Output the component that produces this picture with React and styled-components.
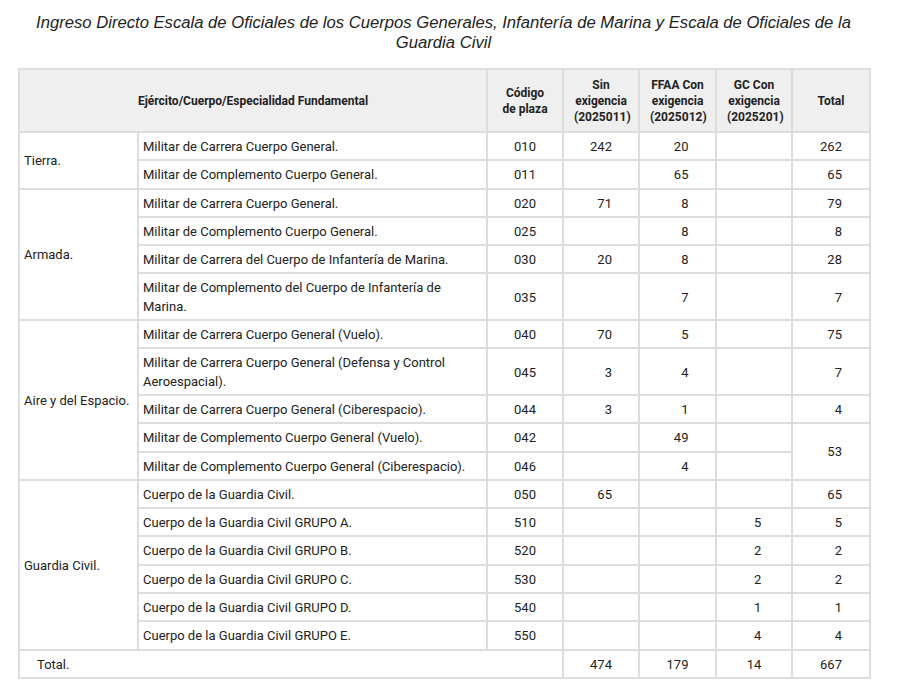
import React from "react";
import styled, { createGlobalStyle } from "styled-components";

const GlobalStyle = createGlobalStyle`
  body {
    margin: 0;
    background: #ffffff;
    font-family: Roboto, "Liberation Sans", Arial, sans-serif;
    color: #222222;
  }
`;

const Wrapper = styled.div`
  width: 851px;
  margin: 0 0 0 18px;
  padding-top: 13px;
`;

const Title = styled.h2`
  margin: 0 0 15px 0;
  font-family: "Liberation Sans", Arial, sans-serif;
  font-size: 16.65px;
  font-style: italic;
  font-weight: normal;
  line-height: 20px;
  text-align: center;
  color: #222222;
`;

const Table = styled.table`
  width: 851px;
  table-layout: fixed;
  border-collapse: collapse;
  border: 2px solid #dddddd;
  font-size: 13px;
`;

const HeadCell = styled.th`
  background: #efefef;
  border: 2px solid #dddddd;
  padding: 7px 10px 6px;
  font-size: 12px;
  font-weight: bold;
  line-height: 16px;
  text-align: center;
  vertical-align: middle;
`;

const Cell = styled.td`
  border: 2px solid #dddddd;
  padding: 5px 4px 3px;
  line-height: 18.3px;
  vertical-align: middle;
  text-align: ${(p) => (p.$center ? "center" : "left")};
  padding-left: ${(p) => (p.$indent ? "17px" : "4px")};
`;

const Num = styled.span`
  display: inline-block;
  width: ${(p) => p.$digits * 0.562}em;
  text-align: right;
`;

const columns = [119, 349, 76, 76, 77, 76, 78];
const digits = [3, 3, 2, 3];

const groups = [
  {
    name: "Tierra.",
    rows: [
      ["Militar de Carrera Cuerpo General.", "010", "242", "20", "", "262"],
      ["Militar de Complemento Cuerpo General.", "011", "", "65", "", "65"],
    ],
  },
  {
    name: "Armada.",
    rows: [
      ["Militar de Carrera Cuerpo General.", "020", "71", "8", "", "79"],
      ["Militar de Complemento Cuerpo General.", "025", "", "8", "", "8"],
      ["Militar de Carrera del Cuerpo de Infantería de Marina.", "030", "20", "8", "", "28"],
      ["Militar de Complemento del Cuerpo de Infantería de Marina.", "035", "", "7", "", "7"],
    ],
  },
  {
    name: "Aire y del Espacio.",
    rows: [
      ["Militar de Carrera Cuerpo General (Vuelo).", "040", "70", "5", "", "75"],
      ["Militar de Carrera Cuerpo General (Defensa y Control Aeroespacial).", "045", "3", "4", "", "7"],
      ["Militar de Carrera Cuerpo General (Ciberespacio).", "044", "3", "1", "", "4"],
      ["Militar de Complemento Cuerpo General (Vuelo).", "042", "", "49", "", { value: "53", span: 2 }],
      ["Militar de Complemento Cuerpo General (Ciberespacio).", "046", "", "4", "", null],
    ],
  },
  {
    name: "Guardia Civil.",
    rows: [
      ["Cuerpo de la Guardia Civil.", "050", "65", "", "", "65"],
      ["Cuerpo de la Guardia Civil GRUPO A.", "510", "", "", "5", "5"],
      ["Cuerpo de la Guardia Civil GRUPO B.", "520", "", "", "2", "2"],
      ["Cuerpo de la Guardia Civil GRUPO C.", "530", "", "", "2", "2"],
      ["Cuerpo de la Guardia Civil GRUPO D.", "540", "", "", "1", "1"],
      ["Cuerpo de la Guardia Civil GRUPO E.", "550", "", "", "4", "4"],
    ],
  },
];

const totals = ["474", "179", "14", "667"];

function NumCell({ value, col, span }) {
  return (
    <Cell $center rowSpan={span}>
      {value ? <Num $digits={digits[col]}>{value}</Num> : null}
    </Cell>
  );
}

export default function App() {
  return (
    <>
      <GlobalStyle />
      <Wrapper>
        <Title>
          Ingreso Directo Escala de Oficiales de los Cuerpos Generales, Infantería de Marina y
          Escala de Oficiales de la Guardia Civil
        </Title>
        <Table>
          <colgroup>
            {columns.map((w, i) => (
              <col key={i} style={{ width: w }} />
            ))}
          </colgroup>
          <thead>
            <tr>
              <HeadCell colSpan={2}>Ejército/Cuerpo/Especialidad Fundamental</HeadCell>
              <HeadCell>Código de plaza</HeadCell>
              <HeadCell>Sin exigencia (2025011)</HeadCell>
              <HeadCell>FFAA Con exigencia (2025012)</HeadCell>
              <HeadCell>GC Con exigencia (2025201)</HeadCell>
              <HeadCell>Total</HeadCell>
            </tr>
          </thead>
          <tbody>
            {groups.map((g) =>
              g.rows.map((r, i) => (
                <tr key={g.name + i}>
                  {i === 0 && <Cell rowSpan={g.rows.length}>{g.name}</Cell>}
                  <Cell>{r[0]}</Cell>
                  <Cell $center>{r[1]}</Cell>
                  {r.slice(2).map((v, c) => {
                    if (v === null) return null;
                    if (typeof v === "object")
                      return <NumCell key={c} value={v.value} col={c} span={v.span} />;
                    return <NumCell key={c} value={v} col={c} />;
                  })}
                </tr>
              ))
            )}
            <tr>
              <Cell colSpan={3} $indent>
                Total.
              </Cell>
              {totals.map((v, c) => (
                <NumCell key={c} value={v} col={c} />
              ))}
            </tr>
          </tbody>
        </Table>
      </Wrapper>
    </>
  );
}
